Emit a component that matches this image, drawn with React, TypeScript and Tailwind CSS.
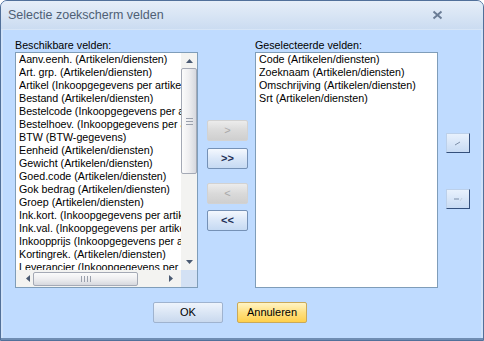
import React from 'react';

const available = [
  'Aanv.eenh. (Artikelen/diensten)',
  'Art. grp. (Artikelen/diensten)',
  'Artikel (Inkoopgegevens per artikel)',
  'Bestand (Artikelen/diensten)',
  'Bestelcode (Inkoopgegevens per artikel)',
  'Bestelhoev. (Inkoopgegevens per artikel)',
  'BTW (BTW-gegevens)',
  'Eenheid (Artikelen/diensten)',
  'Gewicht (Artikelen/diensten)',
  'Goed.code (Artikelen/diensten)',
  'Gok bedrag (Artikelen/diensten)',
  'Groep (Artikelen/diensten)',
  'Ink.kort. (Inkoopgegevens per artikel)',
  'Ink.val. (Inkoopgegevens per artikel)',
  'Inkoopprijs (Inkoopgegevens per artikel)',
  'Kortingrek. (Artikelen/diensten)',
  'Leverancier (Inkoopgegevens per artikel)',
];

const selected = [
  'Code (Artikelen/diensten)',
  'Zoeknaam (Artikelen/diensten)',
  'Omschrijving (Artikelen/diensten)',
  'Srt (Artikelen/diensten)',
];

const Arrow = ({ dir }: { dir: 'up' | 'down' | 'left' | 'right' }) => {
  const pts = {
    up: '0,4 3.5,0 7,4',
    down: '0,0 3.5,4 7,0',
    left: '4,0 0,3.5 4,7',
    right: '0,0 4,3.5 0,7',
  }[dir];
  const vertical = dir === 'up' || dir === 'down';
  return (
    <svg width={vertical ? 7 : 4} height={vertical ? 4 : 7} viewBox={vertical ? '0 0 7 4' : '0 0 4 7'}>
      <polygon points={pts} fill="#4a5a72" />
    </svg>
  );
};

const MoveButton = ({ label, enabled }: { label: string; enabled: boolean }) =>
  enabled ? (
    <button className="h-[21px] w-[41px] rounded-[2px] border border-[#7591b6] bg-gradient-to-b from-[#f4f8fe] via-[#dae7f8] to-[#c6daf3] text-[11px] font-bold leading-none text-[#1e2f56]">
      {label}
    </button>
  ) : (
    <button className="h-[21px] w-[41px] rounded-[2px] border border-[#d2d2d2] bg-gradient-to-b from-[#ececec] via-[#dadada] to-[#cfcfcf] text-[11px] leading-none text-[#a9a9a9]">
      {label}
    </button>
  );

const OrderButton = ({ up }: { up: boolean }) => (
  <button className="flex h-[20px] w-[24px] items-center justify-center border border-[#bcd0ea] border-b-[#34507c] border-r-[#34507c] bg-gradient-to-b from-[#e8f1fd] to-[#c8dbf4]">
    <svg width="10" height="6" viewBox="0 0 10 6">
      {up ? (
        <line x1="2" y1="5" x2="7" y2="2" stroke="#7d8fa9" strokeWidth="1" />
      ) : (
        <>
          <line x1="1" y1="3" x2="6" y2="3" stroke="#7d8fa9" strokeWidth="1" />
          <line x1="7" y1="5" x2="9" y2="2" stroke="#c2cfe0" strokeWidth="1" />
        </>
      )}
    </svg>
  </button>
);

const ListBox = ({ items, scroll }: { items: string[]; scroll: boolean }) => (
  <div className="flex h-[236px] w-[183px] flex-col border border-[#7f9db9] bg-white">
    <div className="flex min-h-0 flex-1">
      <div className="min-w-0 flex-1 overflow-hidden pl-[3px]">
        {items.map((t) => (
          <div key={t} className="h-[13px] overflow-hidden whitespace-nowrap text-[10.7px] leading-[13px] text-black">
            {t}
          </div>
        ))}
      </div>
      {scroll && (
        <div className="flex w-[16px] flex-col bg-[#f3f3f1]">
          <div className="flex h-[15px] items-center justify-center">
            <Arrow dir="up" />
          </div>
          <div className="flex h-[106px] flex-col items-center justify-center gap-[2px] rounded-[2px] border border-[#a4a9b5] bg-gradient-to-r from-[#fbfbfb] via-[#eeeef0] to-[#d6d8de]">
            <div className="h-px w-[7px] bg-[#9aa0ac]" />
            <div className="h-px w-[7px] bg-[#9aa0ac]" />
            <div className="h-px w-[7px] bg-[#9aa0ac]" />
          </div>
          <div className="flex-1" />
          <div className="flex h-[16px] items-center justify-center">
            <Arrow dir="down" />
          </div>
        </div>
      )}
    </div>
    {scroll && (
      <div className="flex h-[17px]">
        <div className="flex flex-1 items-center bg-[#f3f3f1]">
          <div className="flex w-[17px] items-center justify-center pl-[6px]">
            <Arrow dir="left" />
          </div>
          <div className="flex h-[14px] w-[105px] items-center justify-center gap-[2px] rounded-[2px] border border-[#a4a9b5] bg-gradient-to-b from-[#fbfbfb] via-[#eeeef0] to-[#d6d8de]">
            <div className="h-[6px] w-px bg-[#9aa0ac]" />
            <div className="h-[6px] w-px bg-[#9aa0ac]" />
            <div className="h-[6px] w-px bg-[#9aa0ac]" />
            <div className="h-[6px] w-px bg-[#9aa0ac]" />
          </div>
          <div className="flex-1" />
          <div className="flex w-[17px] items-center justify-center pr-[4px]">
            <Arrow dir="right" />
          </div>
        </div>
        <div className="w-[16px] bg-[#d3e1f4]" />
      </div>
    )}
  </div>
);

const App: React.FC = () => {
  return (
    <div
      className="flex h-[341px] w-[484px] flex-col overflow-hidden rounded-t-[7px] border border-[#51709a] bg-[#bfdbff]"
      style={{ fontFamily: '"Liberation Sans", Arial, sans-serif' }}
    >
      {/* title bar */}
      <div className="flex h-[29px] shrink-0 items-center justify-between border-b border-[#d7e5f6] bg-gradient-to-b from-[#e6eef8] to-[#cbdcf1] pl-[7px] pr-[40px]">
        <span className="text-[12.5px] text-[#4f5f75]">Selectie zoekscherm velden</span>
        <svg width="11" height="10" viewBox="0 0 11 10">
          <path d="M1.5 1.5 L9.5 8.5 M9.5 1.5 L1.5 8.5" stroke="#6b7d96" strokeWidth="2" />
        </svg>
      </div>

      {/* body */}
      <div className="flex flex-1 flex-col border-x-2 border-[#cfe2fa] pl-[12px] pt-[9px]">
        <div className="flex">
          <div className="flex flex-col">
            <div className="h-[13px] text-[10.7px] leading-[13px] text-black">Beschikbare velden:</div>
            <ListBox items={available} scroll />
          </div>

          <div className="ml-[9px] flex flex-col pt-[81px]">
            <MoveButton label=">" enabled={false} />
            <div className="h-[7px]" />
            <MoveButton label=">>" enabled />
            <div className="h-[14px]" />
            <MoveButton label="<" enabled={false} />
            <div className="h-[6px]" />
            <MoveButton label="<<" enabled />
          </div>

          <div className="ml-[7px] flex flex-col">
            <div className="h-[13px] text-[10.7px] leading-[13px] text-black">Geselecteerde velden:</div>
            <ListBox items={selected} scroll={false} />
          </div>

          <div className="ml-[8px] flex flex-col pt-[94px]">
            <OrderButton up />
            <div className="h-[36px]" />
            <OrderButton up={false} />
          </div>
        </div>

        <div className="flex gap-[14px] pl-[138px] pt-[14px]">
          <button className="h-[21px] w-[70px] rounded-[2px] border border-[#9fb3cf] bg-gradient-to-b from-[#eef4fc] via-[#dbe6f5] to-[#c9d9ee] text-[11px] text-black">
            OK
          </button>
          <button className="h-[21px] w-[70px] rounded-[2px] border border-[#c9a95a] bg-gradient-to-b from-[#fff4c4] via-[#ffe07f] to-[#ffd04a] text-[11px] text-black">
            Annuleren
          </button>
        </div>
      </div>
      <div className="h-[2px] shrink-0 bg-[#6f8db3]" />
    </div>
  );
};

export default App;
